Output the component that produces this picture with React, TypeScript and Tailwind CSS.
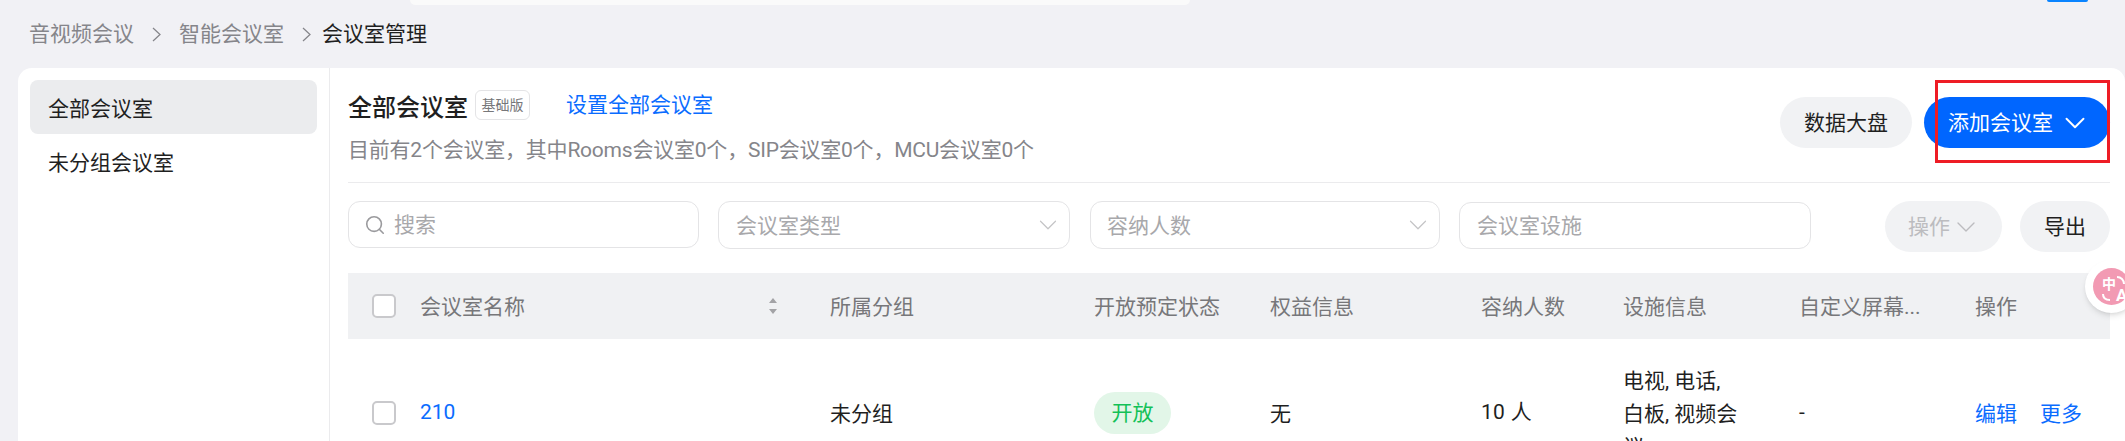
import { ChevronDown, Search } from "lucide-react";

const cols = [
  { label: "所属分组", w: "w-[264px]" },
  { label: "开放预定状态", w: "w-[176px]" },
  { label: "权益信息", w: "w-[211px]" },
  { label: "容纳人数", w: "w-[142px]" },
  { label: "设施信息", w: "w-[176px]" },
  { label: "自定义屏幕...", w: "w-[176px]" },
  { label: "操作", w: "w-[134px]" },
];

const Checkbox = () => (
  <span className="block w-6 h-6 rounded-[5px] border-2 border-[#c9c9cc] bg-white shrink-0" />
);

const Crumb = () => (
  <svg className="shrink-0" width="9" height="15" viewBox="0 0 9 15" fill="none">
    <path d="M1 1l7 6.5L1 14" stroke="#85858a" strokeWidth="1.25" />
  </svg>
);

export default function App() {
  return (
    <div className="relative w-[2125px] h-[441px] overflow-hidden bg-[#f1f1f5] text-[21px] text-[#1f1f1f] font-['Roboto','Noto_Sans_CJK_SC','Noto_Sans',sans-serif]">
      {/* top strip */}
      <div className="h-[5px] flex">
        <div className="w-[410px]" />
        <div className="w-[780px] h-[5px] bg-[#fafafa] rounded-b-[10px]" />
        <div className="w-[857px]" />
        <div className="w-[41px] h-[2px] bg-[#0a84ff] rounded-b-[3px]" />
      </div>

      {/* breadcrumb */}
      <div className="h-[63px] pl-[29px] flex items-center pb-[4px] leading-none text-[#85858a]">
        <span>音视频会议</span>
        <span className="ml-[18px] mr-[18px]"><Crumb /></span>
        <span>智能会议室</span>
        <span className="ml-[18px] mr-[11px]"><Crumb /></span>
        <span className="text-[#1f1f1f]">会议室管理</span>
      </div>

      {/* main card */}
      <div className="ml-[18px] h-[373px] bg-white rounded-t-[14px] flex">
        <div className="w-[312px] shrink-0 border-r border-[#ebebed] pt-3 px-3">
          <div className="w-[287px] h-[54px] rounded-[8px] bg-[#ebecee] flex items-center pl-[18px] pt-[5px]">全部会议室</div>
          <div className="h-[56px] flex items-center pl-[18px] pt-[3px]">未分组会议室</div>
        </div>

        <div className="w-[1762px] ml-[18px] shrink-0">
          {/* title row */}
          <div className="h-[115px] border-b border-[#ebebed] flex justify-between">
            <div className="pt-[22px]">
              <div className="flex items-center h-[30px]">
                <span className="text-[24px] font-medium leading-none pt-[5px]">全部会议室</span>
                <span className="ml-[7px] w-[55px] h-[30px] rounded-[6px] border border-[#e4e4e6] text-[14px] text-[#77777a] flex items-center justify-center">基础版</span>
                <a className="ml-[36px] pt-[2px] text-[#0a6cff]">设置全部会议室</a>
              </div>
              <div className="mt-[15px] text-[#85858a] leading-[30px] tracking-[-0.22px]">目前有2个会议室，其中Rooms会议室0个，SIP会议室0个，MCU会议室0个</div>
            </div>
            <div className="flex gap-3 pt-[29px]">
              <button className="w-[132px] h-[51px] rounded-full bg-[#f1f2f4] pt-[2px]">数据大盘</button>
              <button className="w-[186px] h-[51px] rounded-full bg-[#0066ff] text-white flex items-center pl-6">
                <span className="pt-[2px]">添加会议室</span>
                <ChevronDown className="w-[34px] h-[34px] ml-[5px]" strokeWidth={1.35} />
              </button>
            </div>
          </div>

          {/* filters */}
          <div className="mt-[18px] flex items-start text-[#a8a8ab]">
            <div className="w-[351px] h-[47px] rounded-[12px] border border-[#e4e4e6] flex items-center pl-[15px]">
              <Search className="w-[22px] h-[22px] mr-2 text-[#9a9a9d]" strokeWidth={1.75} />
              <span className="pt-[3px]">搜索</span>
            </div>
            <div className="ml-[19px] w-[352px] h-[48px] rounded-[12px] border border-[#e4e4e6] flex items-center justify-between pl-[17px] pr-[6px]">
              <span className="pt-[3px]">会议室类型</span>
              <ChevronDown className="w-[30px] h-[30px] text-[#c4c4c6]" strokeWidth={0.95} />
            </div>
            <div className="ml-[20px] w-[350px] h-[48px] rounded-[12px] border border-[#e4e4e6] flex items-center justify-between pl-[16px] pr-[6px]">
              <span className="pt-[3px]">容纳人数</span>
              <ChevronDown className="w-[30px] h-[30px] text-[#c4c4c6]" strokeWidth={0.95} />
            </div>
            <div className="ml-[19px] mt-px w-[352px] h-[47px] rounded-[12px] border border-[#e4e4e6] flex items-center pl-[17px] pt-[3px]">
              会议室设施
            </div>
            <button className="ml-[74px] w-[117px] h-[51px] rounded-full bg-[#f1f2f4] text-[#bcbcbf] flex items-center justify-center pl-[3px]">
              <span className="pt-[2px]">操作</span>
              <ChevronDown className="w-8 h-8" strokeWidth={1} />
            </button>
            <button className="ml-[18px] w-[90px] h-[51px] rounded-full bg-[#f1f2f4] text-[#1f1f1f] pt-[2px]">导出</button>
          </div>

          {/* table header */}
          <div className="mt-[21px] h-[66px] bg-[#f0f1f3] flex items-center text-[#77777a]">
            <div className="w-[482px] pl-6 flex items-center">
              <Checkbox />
              <span className="ml-6 pt-[3px]">会议室名称</span>
              <svg className="ml-[243px]" width="10" height="20" viewBox="0 0 10 20">
                <path d="M5 2l4 5H1z M5 18l4-5H1z" fill="#a3a3a6" />
              </svg>
            </div>
            {cols.map((c) => (
              <div key={c.label} className={`${c.w} pt-[3px]`}>{c.label}</div>
            ))}
          </div>

          {/* row */}
          <div className="h-[148px] flex items-center">
            <div className="w-[482px] pl-6 flex items-center">
              <Checkbox />
              <a className="ml-6 text-[#0a6cff]">210</a>
            </div>
            <div className="w-[264px] pt-[3px]">未分组</div>
            <div className="w-[176px]">
              <span className="inline-flex w-[77px] h-[42px] rounded-full bg-[#e2f6e8] text-[#13c157] items-center justify-center pt-[2px]">开放</span>
            </div>
            <div className="w-[211px] pt-[3px]">无</div>
            <div className="w-[142px] tracking-[0.3px]">10 人</div>
            <div className="w-[176px] pt-[3px]">
              <div className="w-[118px] leading-[33px]">电视, 电话, 白板, 视频会议</div>
            </div>
            <div className="w-[176px]">-</div>
            <div className="w-[134px] flex gap-[23px] text-[#0a6cff] pt-[3px]">
              <a>编辑</a>
              <a>更多</a>
            </div>
          </div>
        </div>
      </div>

      {/* highlight box drawn over the button */}
      <div className="absolute left-[1935px] top-[80px] w-[175px] h-[83px] border-[3px] border-[#ee1c25]" />

      {/* translate widget */}
      <div className="absolute left-[2085px] top-[260px] w-[53px] h-[53px] rounded-full bg-white shadow-md flex items-center justify-center">
        <div className="relative w-[37px] h-[37px] rounded-full bg-[#f29ab3] text-white font-bold leading-none">
          <span className="absolute left-[9px] top-[9px] text-[14px]">中</span>
          <span className="absolute left-[23px] top-[19px] text-[17px]">A</span>
          <svg className="absolute left-0 top-0" width="37" height="37" viewBox="0 0 37 37" fill="none">
            <path d="M24 9c4 0 7 3 7 7M10 26c0 4 3 6 7 6" stroke="white" strokeWidth="2" />
          </svg>
        </div>
      </div>
    </div>
  );
}
